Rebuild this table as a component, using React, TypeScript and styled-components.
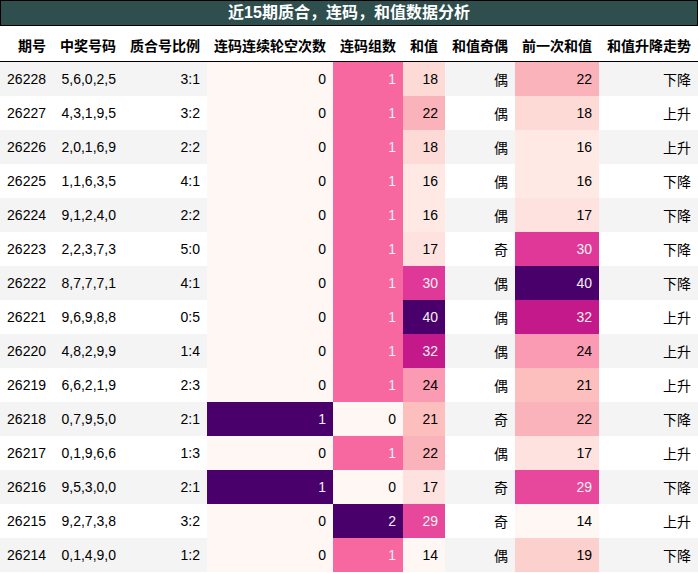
import React from "react";
import styled, { createGlobalStyle } from "styled-components";

const GlobalStyle = createGlobalStyle`
  html, body { margin: 0; padding: 0; background: #ffffff; }
  body { font-family: "Liberation Sans", "Noto Sans CJK SC", sans-serif; }
`;

const COLS = "53px 70px 84px 126px 70px 42px 70px 84px 99px";

const Wrap = styled.div`
  width: 698px;
  display: flex;
  flex-direction: column;
`;

const Title = styled.div`
  height: 24px;
  border: 1px solid #000;
  background: #2f4f4f;
  color: #ffffff;
  font-family: "Liberation Sans", "Noto Sans CJK SC", sans-serif;
  font-weight: bold;
  font-size: 16px;
  line-height: 24px;
  text-align: center;
`;

const Row = styled.div<{ $stripe?: boolean }>`
  display: grid;
  grid-template-columns: ${COLS};
  height: 34px;
  background: ${(p) => (p.$stripe ? "#f4f4f4" : "#ffffff")};
`;

const HeaderRow = styled(Row)`
  height: 35px;
  border-bottom: 1px solid #000;
`;

const HeadCell = styled.div`
  display: flex;
  align-items: center;
  justify-content: flex-end;
  padding-right: 7px;
  padding-top: 2px;
  font-family: "Liberation Sans", "Noto Sans CJK SC", sans-serif;
  font-weight: bold;
  font-size: 14px;
  color: #000;
  white-space: nowrap;
`;

const Cell = styled.div<{ $bg?: string; $fg?: string }>`
  display: flex;
  align-items: center;
  justify-content: flex-end;
  padding-right: 7px;
  font-size: 14px;
  font-family: "Liberation Sans", "Noto Sans CJK SC", sans-serif;
  white-space: nowrap;
  background: ${(p) => p.$bg ?? "transparent"};
  color: ${(p) => p.$fg ?? "#000000"};
`;

const RDPU = [
  "#fff7f3",
  "#fde0dd",
  "#fcc5c0",
  "#fa9fb5",
  "#f768a1",
  "#dd3497",
  "#ae017e",
  "#7a0177",
  "#49006a",
];

function hex(h: string): number[] {
  return [1, 3, 5].map((i) => parseInt(h.slice(i, i + 2), 16));
}

function rdpu(t: number): number[] {
  const x = Math.max(0, Math.min(1, t)) * (RDPU.length - 1);
  const i = Math.min(Math.floor(x), RDPU.length - 2);
  const f = x - i;
  const a = hex(RDPU[i]);
  const b = hex(RDPU[i + 1]);
  return a.map((v, k) => Math.round(v + (b[k] - v) * f));
}

function lum(c: number[]): number {
  const lin = c.map((v) => {
    const s = v / 255;
    return s <= 0.04045 ? s / 12.92 : Math.pow((s + 0.055) / 1.055, 2.4);
  });
  return 0.2126 * lin[0] + 0.7152 * lin[1] + 0.0722 * lin[2];
}

function grad(v: number, min: number, max: number) {
  const c = rdpu((v - min) / (max - min));
  return {
    bg: `rgb(${c[0]},${c[1]},${c[2]})`,
    fg: lum(c) < 0.408 ? "#f1f1f1" : "#000000",
  };
}

type R = [string, string, string, number, number, number, string, number, string];

const rows: R[] = [
  ["26228", "5,6,0,2,5", "3:1", 0, 1, 18, "偶", 22, "下降"],
  ["26227", "4,3,1,9,5", "3:2", 0, 1, 22, "偶", 18, "上升"],
  ["26226", "2,0,1,6,9", "2:2", 0, 1, 18, "偶", 16, "上升"],
  ["26225", "1,1,6,3,5", "4:1", 0, 1, 16, "偶", 16, "下降"],
  ["26224", "9,1,2,4,0", "2:2", 0, 1, 16, "偶", 17, "下降"],
  ["26223", "2,2,3,7,3", "5:0", 0, 1, 17, "奇", 30, "下降"],
  ["26222", "8,7,7,7,1", "4:1", 0, 1, 30, "偶", 40, "下降"],
  ["26221", "9,6,9,8,8", "0:5", 0, 1, 40, "偶", 32, "上升"],
  ["26220", "4,8,2,9,9", "1:4", 0, 1, 32, "偶", 24, "上升"],
  ["26219", "6,6,2,1,9", "2:3", 0, 1, 24, "偶", 21, "上升"],
  ["26218", "0,7,9,5,0", "2:1", 1, 0, 21, "奇", 22, "下降"],
  ["26217", "0,1,9,6,6", "1:3", 0, 1, 22, "偶", 17, "上升"],
  ["26216", "9,5,3,0,0", "2:1", 1, 0, 17, "奇", 29, "下降"],
  ["26215", "9,2,7,3,8", "3:2", 0, 2, 29, "奇", 14, "上升"],
  ["26214", "0,1,4,9,0", "1:2", 0, 1, 14, "偶", 19, "下降"],
];

const headers = [
  "期号",
  "中奖号码",
  "质合号比例",
  "连码连续轮空次数",
  "连码组数",
  "和值",
  "和值奇偶",
  "前一次和值",
  "和值升降走势",
];

function range(idx: 3 | 4 | 5 | 7) {
  const vals = rows.map((r) => r[idx] as number);
  return [Math.min(...vals), Math.max(...vals)];
}

export default function App() {
  const r3 = range(3);
  const r4 = range(4);
  const r5 = range(5);
  const r7 = range(7);
  return (
    <>
      <GlobalStyle />
      <Wrap>
        <Title>近15期质合，连码，和值数据分析</Title>
        <HeaderRow>
          {headers.map((h) => (
            <HeadCell key={h}>{h}</HeadCell>
          ))}
        </HeaderRow>
        {rows.map((r, i) => {
          const g3 = grad(r[3], r3[0], r3[1]);
          const g4 = grad(r[4], r4[0], r4[1]);
          const g5 = grad(r[5], r5[0], r5[1]);
          const g7 = grad(r[7], r7[0], r7[1]);
          return (
            <Row key={r[0]} $stripe={i % 2 === 0}>
              <Cell>{r[0]}</Cell>
              <Cell>{r[1]}</Cell>
              <Cell>{r[2]}</Cell>
              <Cell $bg={g3.bg} $fg={g3.fg}>{r[3]}</Cell>
              <Cell $bg={g4.bg} $fg={g4.fg}>{r[4]}</Cell>
              <Cell $bg={g5.bg} $fg={g5.fg}>{r[5]}</Cell>
              <Cell>{r[6]}</Cell>
              <Cell $bg={g7.bg} $fg={g7.fg}>{r[7]}</Cell>
              <Cell>{r[8]}</Cell>
            </Row>
          );
        })}
      </Wrap>
    </>
  );
}
